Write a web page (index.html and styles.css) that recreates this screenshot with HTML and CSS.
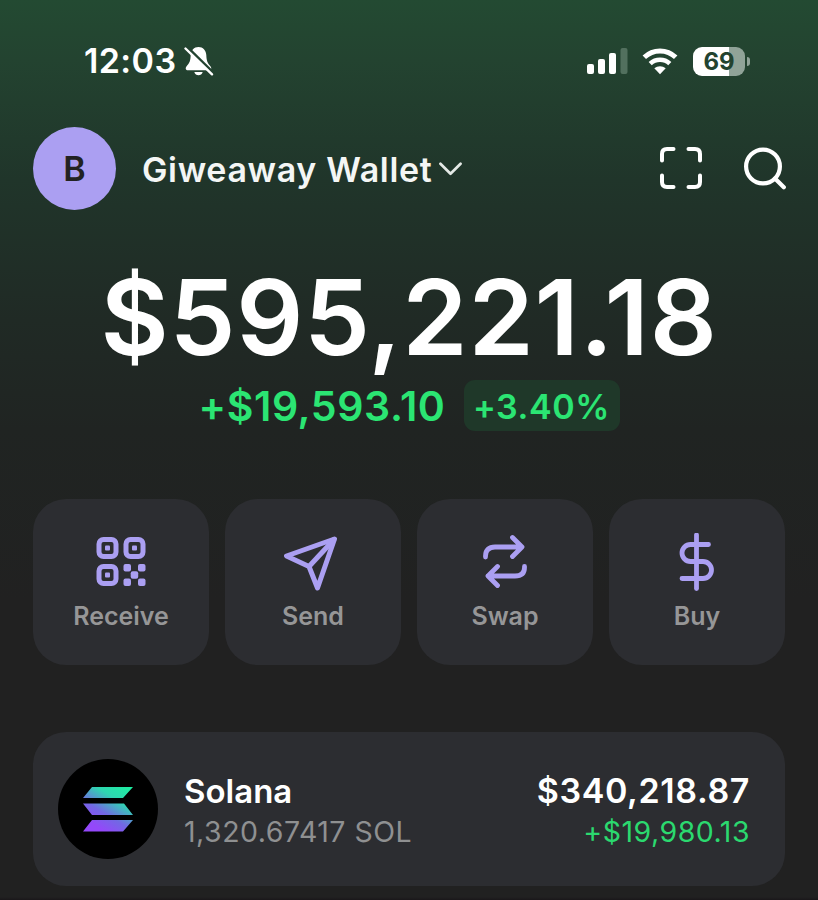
FILE: index.html
```html
<!DOCTYPE html>
<html lang="en">
<head>
    <meta charset="UTF-8">
    <meta name="viewport" content="width=device-width, initial-scale=1.0">
    <title>Wallet</title>
    <link rel="stylesheet" href="styles.css">
</head>
<body>

<div class="status-bar">
    <div class="status-left">
        <span class="time">12:03</span>
        <svg class="bell" width="30" height="30" viewBox="0 0 30 30">
            <path d="M14.5 1C10 1 7 4.500 6.700 9C6.500 15 5.500 17 2.600 20.300C1 22.300 1.700 24.300 4 24.300H25C27.300 24.300 28 22.300 26.400 20.300C23.500 17 22.500 15 22.300 9C22 4.500 19 1 14.500 1Z" fill="#fff"/>
            <path d="M10.300 26H18.700C18 28.300 16.500 29.300 14.500 29.300S11 28.300 10.300 26Z" fill="#fff"/>
            <path d="M3 .8L30 27.400" stroke="#234330" stroke-width="2.600"/>
            <path d="M1.500 2.500L28 28.300" stroke="#fff" stroke-width="2.400" stroke-linecap="round"/>
        </svg>
    </div>
    <div class="status-right">
        <svg width="41" height="26" viewBox="0 0 41 26">
            <rect x="0" y="16" width="7" height="10" rx="2" fill="#fff"/>
            <rect x="11" y="11" width="7" height="15" rx="2" fill="#fff"/>
            <rect x="22" y="5" width="7" height="21" rx="2" fill="#fff"/>
            <rect x="33.500" y="0" width="7" height="26" rx="2" fill="#52705e"/>
        </svg>
        <svg class="wifi" width="36" height="27" viewBox="0 0 36 27">
            <path d="M2.300 9.300C11 .8 25 .8 33.700 9.300" fill="none" stroke="#fff" stroke-width="4.900"/>
            <path d="M8.200 15.600C13.800 10.500 22.200 10.500 27.800 15.600" fill="none" stroke="#fff" stroke-width="4.600"/>
            <path d="M12.300 20.300C15.600 17.400 20.400 17.400 23.700 20.300L18 26.300Z" fill="#fff"/>
        </svg>
        <div class="battery">
            <div class="battery-body">69</div>
            <div class="battery-cap"></div>
        </div>
    </div>
</div>

<div class="header">
    <div class="avatar">B</div>
    <div class="wallet-name">Giweaway Wallet</div>
    <svg class="chevron" width="23" height="14" viewBox="0 0 24 14">
        <path d="M1.500 1.500L12 12L22.500 1.500" fill="none" stroke="#e4e9e6" stroke-width="2.800" stroke-linecap="round" stroke-linejoin="round"/>
    </svg>
    <div class="header-icons">
        <svg width="42" height="42" viewBox="0 0 42 42" fill="none" stroke="#fff" stroke-width="4" stroke-linecap="round">
            <path d="M2 13.500V7Q2 2 7 2H13.500M28.500 2H35Q40 2 40 7V13.500M40 28.500V35Q40 40 35 40H28.500M13.500 40H7Q2 40 2 35V28.500"/>
        </svg>
        <svg width="42" height="43" viewBox="0 0 42 43" fill="none" stroke="#fff" stroke-width="4.200" stroke-linecap="round">
            <circle cx="19" cy="19.500" r="16.900"/>
            <path d="M31 31.500L39.800 40.300"/>
        </svg>
    </div>
</div>

<div class="balance">$595,221.18</div>

<div class="change">
    <span class="change-amount">+$19,593.10</span>
    <span class="change-percent">+3.40%</span>
</div>

<div class="actions">
    <div class="action">
        <svg width="60" height="60" viewBox="0 0 60 60" fill="#ab9ff2">
            <g fill="none" stroke="#ab9ff2" stroke-width="5">
                <rect x="8" y="6.500" width="17" height="17" rx="4.500"/>
                <rect x="35" y="6.500" width="17" height="17" rx="4.500"/>
                <rect x="8" y="33.500" width="17" height="17" rx="4.500"/>
            </g>
            <rect x="14" y="12.500" width="5" height="5" rx="1"/>
            <rect x="41" y="12.500" width="5" height="5" rx="1"/>
            <rect x="14" y="39.500" width="5" height="5" rx="1"/>
            <rect x="32.500" y="31" width="7.500" height="7.500" rx="2"/>
            <rect x="47" y="31" width="7.500" height="7.500" rx="2"/>
            <rect x="39.700" y="38.200" width="7.500" height="7.500" rx="2"/>
            <rect x="32.500" y="45.500" width="7.500" height="7.500" rx="2"/>
            <rect x="47" y="45.500" width="7.500" height="7.500" rx="2"/>
        </svg>
        <span>Receive</span>
    </div>
    <div class="action">
        <svg width="60" height="60" viewBox="0 0 60 60" fill="none" stroke="#ab9ff2" stroke-width="5" stroke-linejoin="round">
            <path d="M51.500 6L3.500 23L26 33.500L34.500 55Z"/>
            <path d="M51.500 6L26 33.500"/>
        </svg>
        <span>Send</span>
    </div>
    <div class="action">
        <svg width="60" height="60" viewBox="0 0 60 60" fill="none" stroke="#ab9ff2" stroke-width="4.800" stroke-linecap="round" stroke-linejoin="round">
            <path d="M10.500 24V23Q10.500 14 20 14H46.500M37.500 4.500L47 14L37.500 23.500"/>
            <path d="M49.500 33.500V34.500Q49.500 43 40 43H13M22.500 33.500L13 43L22.500 52.500"/>
        </svg>
        <span>Swap</span>
    </div>
    <div class="action">
        <svg width="60" height="60" viewBox="0 0 60 60" fill="none" stroke="#ab9ff2" stroke-width="4.800" stroke-linecap="round">
            <path d="M29.500 2V55.500"/>
            <path d="M41.500 11.500H23.500A8.500 8.500 0 0 0 23.500 28.500H36A8.500 8.500 0 0 1 36 45.500H15"/>
        </svg>
        <span>Buy</span>
    </div>
</div>

<div class="token">
    <svg width="100" height="100" viewBox="0 0 100 100">
        <defs>
            <linearGradient id="sol" gradientUnits="userSpaceOnUse" x1="68" y1="24" x2="36" y2="77">
                <stop offset="0" stop-color="#1cf0a0"/>
                <stop offset="0.300" stop-color="#2ed6b0"/>
                <stop offset="0.600" stop-color="#7268e4"/>
                <stop offset="0.850" stop-color="#9448fa"/>
            </linearGradient>
        </defs>
        <circle cx="50" cy="50" r="50" fill="#000"/>
        <path d="M34 28H75L65 39H25ZM25 44.500H66L75 56H34ZM34 61H75L65 72.500H25Z" fill="url(#sol)"/>
    </svg>
    <div class="token-info">
        <div class="token-name">Solana</div>
        <div class="token-amount">1,320.67417 SOL</div>
    </div>
    <div class="token-value">
        <div class="token-price">$340,218.87</div>
        <div class="token-change">+$19,980.13</div>
    </div>
</div>

</body>
</html>
```
FILE: styles.css
```css
* {
    box-sizing: border-box;
}

body {
    margin: 0;
    padding: 0 33px;
    height: 900px;
    overflow: hidden;
    font-family: Inter, "Liberation Sans", sans-serif;
    color: #fff;
    background: linear-gradient(#234a32 0, #234330 60px, #20352a 180px, #202a25 320px, #202422 430px, #212121 600px, #212121 897px, #1a171a 900px);
}

svg {
    display: block;
    flex-shrink: 0;
}

.status-bar {
    display: flex;
    justify-content: space-between;
    align-items: center;
    height: 92px;
    padding: 30px 35px 0 51px;
}

.status-left,
.status-right {
    display: flex;
    align-items: center;
}

.time {
    font-size: 34px;
    font-weight: 600;
    line-height: 40px;
    letter-spacing: 0.4px;
}

.bell {
    margin-left: 8px;
}

.wifi {
    margin-left: 14px;
}

.battery {
    display: flex;
    align-items: center;
    margin-left: 15px;
}

.battery-body {
    width: 52px;
    height: 29px;
    border-radius: 9px;
    background: linear-gradient(to right, #fff 36px, #90a398 36px);
    color: #234330;
    font-size: 24px;
    font-weight: 700;
    line-height: 29px;
    text-align: center;
}

.battery-cap {
    width: 3px;
    height: 9px;
    margin-left: 2px;
    border-radius: 0 4px 4px 0;
    background: #90a398;
}

.header {
    display: flex;
    align-items: center;
    height: 83px;
    margin: 35px -1px 0 0;
}

.avatar {
    width: 83px;
    height: 83px;
    border-radius: 50%;
    background: #ab9ff2;
    color: #222;
    font-size: 34px;
    font-weight: 600;
    line-height: 83px;
    text-align: center;
}

.wallet-name {
    margin-left: 26px;
    padding-top: 1px;
    color: #f4f6f5;
    font-size: 34px;
    font-weight: 600;
    letter-spacing: 0.65px;
    white-space: nowrap;
}

.chevron {
    margin-left: 7px;
}

.header-icons {
    display: flex;
    gap: 42px;
    margin-left: auto;
}

.balance {
    height: 126px;
    margin-top: 44px;
    font-size: 105px;
    font-weight: 600;
    line-height: 126px;
    letter-spacing: 0.7px;
    text-align: center;
    white-space: nowrap;
}

.change {
    display: flex;
    justify-content: center;
    align-items: center;
    gap: 18px;
    height: 51px;
    color: #2be573;
}

.change-amount {
    font-size: 41px;
    font-weight: 600;
    letter-spacing: 0.6px;
}

.change-percent {
    width: 156px;
    height: 51px;
    border-radius: 11px;
    background: #1f3829;
    font-size: 34px;
    font-weight: 600;
    line-height: 53px;
    letter-spacing: 0.6px;
    text-align: center;
}

.actions {
    display: grid;
    grid-template-columns: repeat(4, 1fr);
    gap: 16px;
    margin-top: 68px;
}

.action {
    display: flex;
    flex-direction: column;
    align-items: center;
    height: 166px;
    padding-top: 34px;
    border-radius: 33px;
    background: #2c2d31;
    color: #969697;
    font-size: 25px;
    font-weight: 600;
    line-height: 30px;
}

.action span {
    margin-top: 8px;
}

.token {
    display: flex;
    align-items: center;
    height: 154px;
    margin-top: 67px;
    padding: 4px 35px 0 25px;
    border-radius: 33px;
    background: #2c2d31;
}

.token svg {
    margin-top: -4px;
}

.token-info {
    margin-left: 26px;
}

.token-value {
    margin-left: auto;
    text-align: right;
}

.token-name,
.token-price {
    font-size: 33px;
    font-weight: 600;
    line-height: 42px;
}

.token-price {
    font-size: 34px;
    letter-spacing: 0.6px;
}

.token-amount,
.token-change {
    font-size: 28.5px;
    line-height: 40px;
    letter-spacing: 0.5px;
}

.token-amount {
    color: #8f9091;
}

.token-change {
    color: #2bd96f;
}
```
